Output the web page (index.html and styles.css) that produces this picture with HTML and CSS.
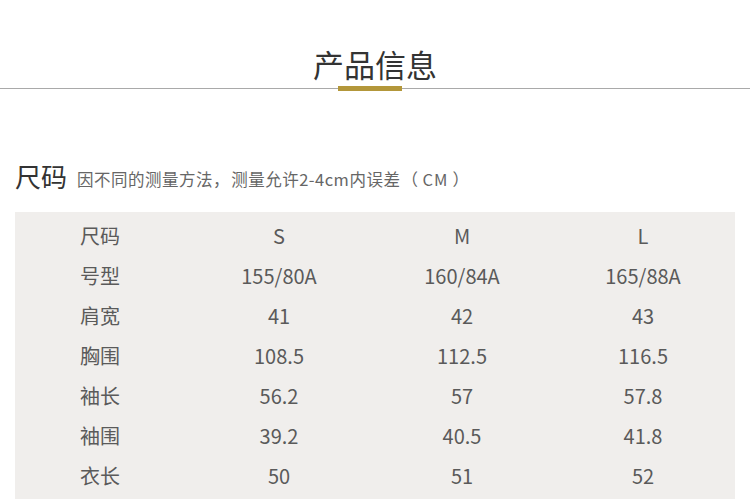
FILE: index.html
```html
<!DOCTYPE html>
<html lang="zh">
<head>
<meta charset="utf-8">
<link rel="stylesheet" href="styles.css">
</head>
<body>
<header class="head">
  <h1 class="title">产品信息</h1>
  <div class="rule"><span class="bar"></span></div>
</header>
<section class="size">
  <h2 class="size-title">尺码<span class="note">因不同的测量方法<span class="fw fw-l">，</span>测量允许2-4cm内误差<span class="fw fw-r">（</span><span class="unit">CM</span><span class="fw fw-l">）</span></span></h2>
  <div class="table">
    <div class="row"><span>尺码</span><span>S</span><span>M</span><span>L</span></div>
    <div class="row"><span>号型</span><span>155/80A</span><span>160/84A</span><span>165/88A</span></div>
    <div class="row"><span>肩宽</span><span>41</span><span>42</span><span>43</span></div>
    <div class="row"><span>胸围</span><span>108.5</span><span>112.5</span><span>116.5</span></div>
    <div class="row"><span>袖长</span><span>56.2</span><span>57</span><span>57.8</span></div>
    <div class="row"><span>袖围</span><span>39.2</span><span>40.5</span><span>41.8</span></div>
    <div class="row"><span>衣长</span><span>50</span><span>51</span><span>52</span></div>
  </div>
</section>
</body>
</html>
```
FILE: styles.css
```css
* { box-sizing: border-box; }
body {
  margin: 0;
  width: 750px;
  height: 500px;
  overflow: hidden;
  background: #fff;
  font-family: "Noto Sans CJK SC", "Noto Sans", sans-serif;
  color: #555;
}
.head {
  padding-top: 44px;
}
.title {
  margin: 0;
  text-align: center;
  font-size: 31px;
  font-weight: 400;
  line-height: 40px;
  color: #333;
}
.rule {
  position: relative;
  margin-top: 2px;
  height: 5px;
  display: flex;
  justify-content: center;
}
.rule::before {
  content: "";
  position: absolute;
  left: 0;
  right: 0;
  top: 2px;
  height: 1px;
  background: #a9a9a9;
}
.bar {
  position: relative;
  width: 64px;
  height: 5px;
  margin-right: 10px;
  background: #b3973a;
}
.size {
  padding: 0 15px;
  margin-top: 65px;
}
.size-title {
  margin: 0;
  display: flex;
  align-items: baseline;
  font-size: 26px;
  font-weight: 400;
  color: #333;
  line-height: 40px;
  height: 40px;
}
.note {
  font-size: 16.5px;
  color: #666;
  margin-left: 10px;
  letter-spacing: 0.5px;
  position: relative;
  top: -1px;
}
.fw {
  display: inline-block;
  width: 1.1em;
}
.fw-l { text-align: left; }
.fw-r { text-align: right; }
.unit {
  padding: 0 4px;
  letter-spacing: 1px;
}
.table {
  margin-top: 16px;
  background: #f0eeec;
  padding: 3px 0 4px;
}
.row {
  display: grid;
  grid-template-columns: 170px 188px 178px 184px;
  height: 40px;
  align-items: center;
  font-size: 20px;
  color: #5a5a5a;
}
.row span {
  text-align: center;
}
```
